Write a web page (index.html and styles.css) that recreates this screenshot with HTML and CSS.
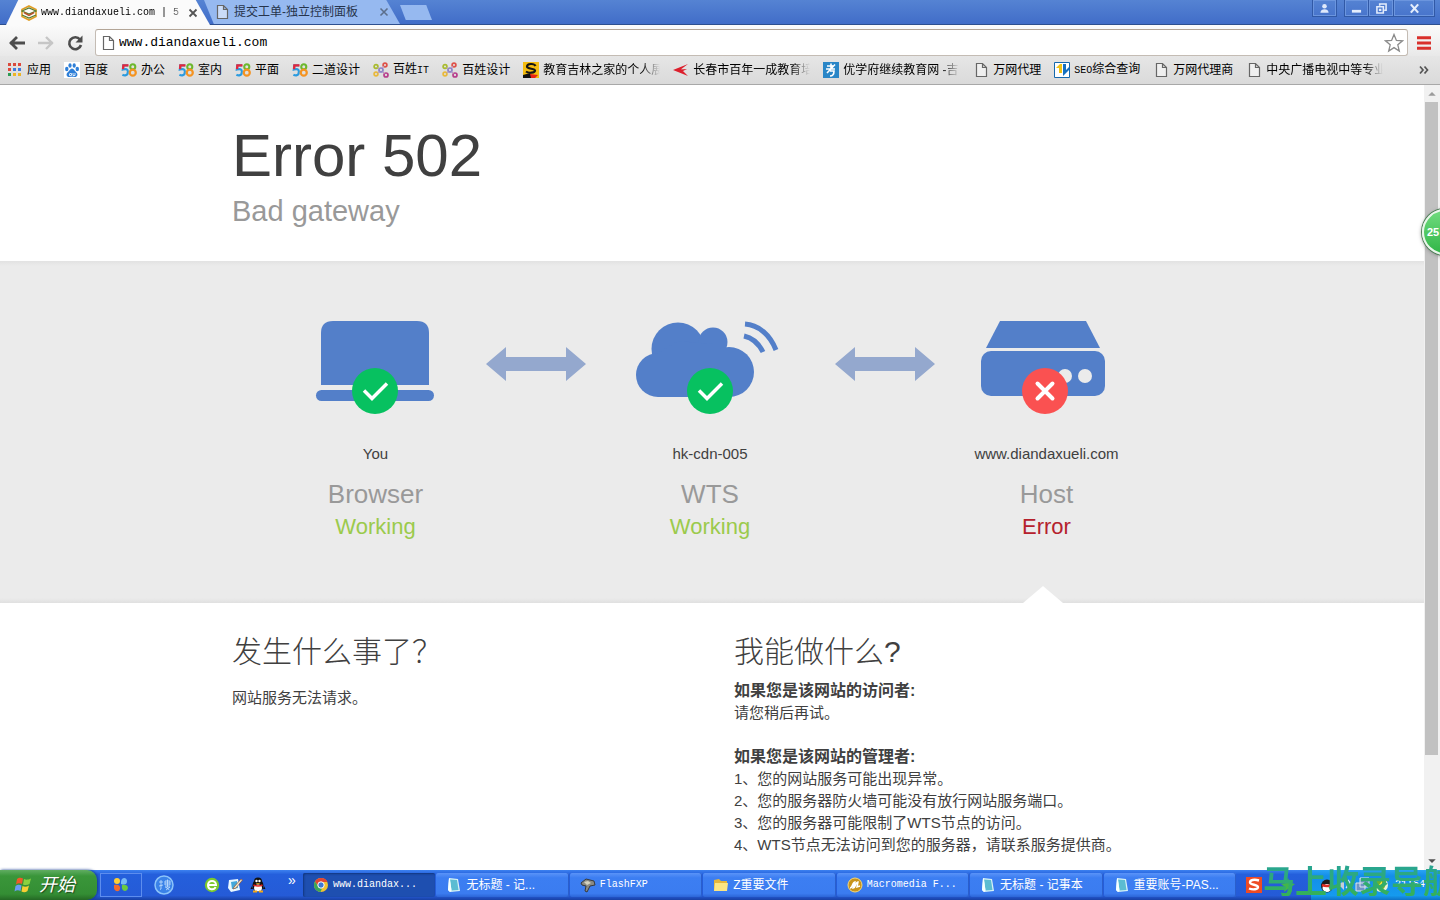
FILE: index.html
```html
<!DOCTYPE html>
<html lang="zh-CN">
<head>
<meta charset="utf-8">
<title>www.diandaxueli.com | 502</title>
<link rel="stylesheet" href="styles.css">
</head>
<body>
<svg class="defs" aria-hidden="true">
  <defs>
    <symbol id="page" viewBox="0 0 16 16"><path d="M3.5 1.5h6l4 4v9h-10z M9.5 1.5v4h4" fill="#fff" fill-opacity=".5" stroke="#666" stroke-width="1.2"/></symbol>
    <symbol id="five8" viewBox="0 0 17 16"><path d="M7.500 3H2.500L2 7.500c5-1.500 6 1 5 4.500-1 2-3.500 2-5.500 1" fill="none" stroke="#2b9be0" stroke-width="2.400"/><path d="M8 3H2.500L2.200 7" fill="none" stroke="#e6263a" stroke-width="2.400"/><circle cx="12.500" cy="4.500" r="2.700" fill="none" stroke="#6cb82e" stroke-width="2.200"/><circle cx="12.500" cy="10.800" r="3.200" fill="none" stroke="#f59320" stroke-width="2.400"/></symbol>
    <symbol id="dots" viewBox="0 0 16 16"><g fill="none" stroke-width="1.700"><circle cx="3" cy="4.500" r="1.900" stroke="#a9bb2e"/><circle cx="12" cy="3" r="1.900" stroke="#df5148"/><circle cx="8" cy="8" r="2" stroke="#8b80c8"/><circle cx="3" cy="12" r="1.900" stroke="#e9b93a"/><circle cx="13" cy="13" r="2" stroke="#b83d8b"/></g><path d="M4.500 5.500l2 1.500m3-1l1.500-2M6.500 9.500L4.500 11m5-1.500l2 2" stroke="#b39ac0"/></symbol>
    <symbol id="note" viewBox="0 0 16 16"><path d="M3 1l9 1 2 12-10 1-2-2z" fill="#d9f3f7"/><path d="M4 2.500l7 .5 1.500 10-7 .5z" fill="#5bbcd2"/><path d="M3 1L2 13l2 2 1.500-1.500L4 2.500z" fill="#f5ffff"/></symbol>
    <symbol id="tick" viewBox="0 0 46 46"><circle cx="23" cy="23" r="23" fill="#07c160"/><path d="M12 22.500l8 8L35 15.500" fill="none" stroke="#fff" stroke-width="3.500"/></symbol>
    <symbol id="arrow" viewBox="0 0 100 34"><path d="M0 17L20 0v10h60V0l20 17-20 17V24H20v10z" fill="#94a8ce"/></symbol>
  </defs>
</svg>

<header class="titlebar">
  <div class="tabs">
    <div class="tab active">
      <svg class="ic" viewBox="0 0 16 16"><path d="M8 1l7 3.500v7L8 15l-7-3.500v-7z" fill="none" stroke="#df9c23" stroke-width="1.600"/><path d="M1 6l7-3 7 3-7 3zM1 10l7 3 7-3" fill="none" stroke="#587d31" stroke-width="1.300"/><path d="M3 7.500l5 3 5-3" fill="none" stroke="#b5522a" stroke-width="1.500"/></svg>
      <span class="tabname mono">www.diandaxueli.com | 5</span>
      <button class="close" aria-label="关闭标签页"><svg viewBox="0 0 10 10"><path d="M1.500 1.500l7 7m0-7l-7 7" stroke="#555" stroke-width="1.800"/></svg></button>
    </div>
    <div class="tab">
      <svg class="ic"><use href="#page"/></svg>
      <span class="tabname">提交工单-独立控制面板</span>
      <button class="close" aria-label="关闭标签页"><svg viewBox="0 0 10 10"><path d="M1.500 1.500l7 7m0-7l-7 7" stroke="#5c6f8c" stroke-width="1.600"/></svg></button>
    </div>
    <button class="newtab" aria-label="新标签页"></button>
  </div>
  <div class="winbtns">
    <button class="user" aria-label="用户"><svg viewBox="0 0 12 12"><circle cx="6" cy="3.500" r="2.500" fill="#dfe9fb"/><path d="M1.500 10.500c0-5 9-5 9 0z" fill="#dfe9fb"/></svg></button>
    <button aria-label="最小化"><svg viewBox="0 0 12 12"><path d="M1 9h10" stroke="#e4edfc" stroke-width="3"/></svg></button>
    <button aria-label="还原"><svg viewBox="0 0 12 12"><path d="M4 3V1h7v7H9M1 4h7v7H1zM4 7h1v1H4z" fill="none" stroke="#e4edfc" stroke-width="1.700"/></svg></button>
    <button class="x" aria-label="关闭"><svg viewBox="0 0 12 12"><path d="M2 1.500l8 9m0-9l-8 9" stroke="#e4edfc" stroke-width="2.400"/></svg></button>
  </div>
</header>

<nav class="toolbar">
  <button aria-label="后退"><svg viewBox="0 0 18 18"><path d="M2 9h15M9 3L3 9l6 6" fill="none" stroke="#4d4d4d" stroke-width="2.800"/></svg></button>
  <button aria-label="前进"><svg viewBox="0 0 18 18"><path d="M1 9h15M9 3l6 6-6 6" fill="none" stroke="#c6c6c6" stroke-width="2.400"/></svg></button>
  <button aria-label="刷新"><svg viewBox="0 0 18 18"><path d="M14 5.500A6 6 0 1 0 15 11" fill="none" stroke="#4d4d4d" stroke-width="2.600"/><path d="M16.500 1.500v7h-7z" fill="#4d4d4d"/></svg></button>
  <div class="address">
    <svg class="ic"><use href="#page"/></svg>
    <input class="url" type="text" value="www.diandaxueli.com" aria-label="地址">
    <button class="star" aria-label="收藏"><svg viewBox="0 0 20 20"><path d="M10 1.500l2.400 5.900 6.100.4-4.700 4 1.500 6.200L10 14.600 4.700 18l1.500-6.200-4.700-4 6.100-.4z" fill="#fff" stroke="#8a8a8a" stroke-width="1.300"/></svg></button>
  </div>
  <button class="menu" aria-label="菜单"><svg viewBox="0 0 14 14"><path d="M0 1.800h14M0 7h14M0 12.200h14" stroke="#d9302c" stroke-width="3"/></svg></button>
</nav>

<nav class="bookmarks">
  <a href="#"><svg viewBox="0 0 16 16"><g><path d="M1 1h3v3H1zM6 1h3v3H6z" fill="#d94b3d"/><path d="M11 1h3v3h-3zM1 6h3v3H1z" fill="#e0483b"/><path d="M6 6h3v3H6zM11 6h3v3h-3z" fill="#3d7be0"/><path d="M1 11h3v3H1z" fill="#2c9c54"/><path d="M6 11h3v3H6zM11 11h3v3h-3z" fill="#edb526"/></g></svg><span>应用</span></a>
  <a href="#"><svg viewBox="0 0 16 16"><path d="M0 0h16v16H0z" fill="#fff"/><g fill="#2e7fd8"><ellipse cx="2.800" cy="7" rx="1.700" ry="2.200"/><ellipse cx="6" cy="3.500" rx="1.600" ry="2.300"/><ellipse cx="10.200" cy="3.500" rx="1.600" ry="2.300"/><ellipse cx="13.300" cy="7" rx="1.700" ry="2.200"/><path d="M8 6.500c2 0 2.500 2.500 4.500 4 2 2 .5 5-2 4.500-2-.5-3-.5-5 0-2.500.5-4-2.500-2-4.500 2-1.500 2.500-4 4.500-4z"/></g><path d="M5.500 11.500h2v2h-2v-1.500M9 11v2.500h2V11" fill="none" stroke="#fff" stroke-width=".8"/></svg><span>百度</span></a>
  <a href="#"><svg><use href="#five8"/></svg><span>办公</span></a>
  <a href="#"><svg><use href="#five8"/></svg><span>室内</span></a>
  <a href="#"><svg><use href="#five8"/></svg><span>平面</span></a>
  <a href="#"><svg><use href="#five8"/></svg><span>二道设计</span></a>
  <a href="#"><svg><use href="#dots"/></svg><span>百姓<span class="mono">IT</span></span></a>
  <a href="#"><svg><use href="#dots"/></svg><span>百姓设计</span></a>
  <a href="#"><svg viewBox="0 0 16 16"><path d="M0 0h16v16H0z" fill="#f5bd10"/><path d="M0 16v-3l7-2 2 3v2z" fill="#111"/><path d="M7 12l8 1-3 3H8z" fill="#e82315"/><path d="M12.500 4C11 1 4 1.500 4 4.500S12 6 12 8.500 5.500 11.500 3 9.500" fill="none" stroke="#151515" stroke-width="2.200"/></svg><span class="long">教育吉林之家的个人展</span></a>
  <a href="#"><svg viewBox="0 0 16 16"><path d="M0 8L15 2 7 8zM0 8l8-1 7 7zM0 8l14-1-6 3z" fill="#dc1f2c"/></svg><span class="long">长春市百年一成教育培</span></a>
  <a href="#"><svg viewBox="0 0 16 16"><path d="M0 0h16v16H0z" fill="#2a86c7"/><path d="M4 4h6M8 1.500V7M3 7h9M12 2.500L4 11M7 9h4c0 3-1 5-4 5" fill="none" stroke="#fff" stroke-width="1.600"/></svg><span class="long">优学府继续教育网 -吉</span></a>
  <a href="#"><svg><use href="#page"/></svg><span>万网代理</span></a>
  <a href="#"><svg viewBox="0 0 16 16"><path d="M.5.500h15v15H.5z" fill="#fff" stroke="#1668ad"/><path d="M2 6l4-4h2v9H5V6z" fill="#f2c414"/><path d="M9 2v12l6-6V5l-3 3V2z" fill="#1670c0"/></svg><span><span class="mono">SEO</span>综合查询</span></a>
  <a href="#"><svg><use href="#page"/></svg><span>万网代理商</span></a>
  <a href="#"><svg><use href="#page"/></svg><span class="long">中央广播电视中等专业</span></a>
  <button class="more" aria-label="更多书签"><svg viewBox="0 0 10 10"><path d="M1 1.500L4 5 1 8.500M5.500 1.500l3 3.500-3 3.500" fill="none" stroke="#555" stroke-width="1.700"/></svg></button>
</nav>

<div class="viewport">
  <main class="page">
    <section class="heading">
      <div class="wrap">
        <h1>Error 502</h1>
        <p class="sub">Bad gateway</p>
      </div>
    </section>

    <section class="status">
      <div class="chain">
        <div class="node">
          <svg class="pic" viewBox="0 0 124 93"><path d="M8 64V12Q8 0 20 0h84q12 0 12 12v52z" fill="#537fc9"/><rect x="3" y="69" width="118" height="11" rx="5.500" fill="#537fc9"/><use href="#tick" x="39" y="47" width="46" height="46"/></svg>
          <p class="name">You</p><h3>Browser</h3><p class="state ok">Working</p>
        </div>
        <svg class="link"><use href="#arrow"/></svg>
        <div class="node">
          <svg class="pic wide" viewBox="0 0 148 93"><g fill="#537fc9"><circle cx="42" cy="28" r="26.500"/><circle cx="77" cy="21" r="14.500"/><circle cx="22" cy="54" r="22"/><circle cx="93" cy="51" r="25"/><path d="M22 32L42 20l35 3 16 12v41H22z"/></g><g fill="none" stroke="#537fc9" stroke-width="5"><path d="M109 3c14 1 25 11 31 26M108 15c9 2 15 8 19 16"/></g><use href="#tick" x="51" y="47" width="46" height="46"/></svg>
          <p class="name">hk-cdn-005</p><h3>WTS</h3><p class="state ok">Working</p>
        </div>
        <svg class="link"><use href="#arrow"/></svg>
        <div class="node host">
          <svg class="pic" viewBox="0 0 124 93"><path d="M19 0h86l14 27H5z" fill="#537fc9"/><rect x="0" y="30" width="124" height="45" rx="10" fill="#537fc9"/><circle cx="84" cy="55" r="7" fill="#ebebeb"/><circle cx="104" cy="55" r="7" fill="#ebebeb"/><circle cx="64" cy="70" r="23" fill="#fa5151"/><path d="M56.500 62.500l15 15m0-15l-15 15" stroke="#fff" stroke-width="4" stroke-linecap="round"/></svg>
          <p class="name">www.diandaxueli.com</p><h3>Host</h3><p class="state bad">Error</p>
          <svg class="notch" viewBox="0 0 40 17"><path d="M0 17L20 0l20 17z" fill="#fff"/></svg>
        </div>
      </div>
    </section>

    <section class="wrap help">
      <div>
        <h2>发生什么事了？</h2>
        <p class="first">网站服务无法请求。</p>
      </div>
      <div>
        <h2>我能做什么?</h2>
        <p><strong>如果您是该网站的访问者:</strong></p>
        <p>请您稍后再试。</p>
        <p class="gap"><strong>如果您是该网站的管理者:</strong></p>
        <p>1、您的网站服务可能出现异常。</p>
        <p>2、您的服务器防火墙可能没有放行网站服务端口。</p>
        <p>3、您的服务器可能限制了WTS节点的访问。</p>
        <p>4、WTS节点无法访问到您的服务器，请联系服务提供商。</p>
      </div>
    </section>
  </main>
  <div class="scrollbar">
    <svg viewBox="0 0 17 17"><path d="M4.500 11l4-4 4 4z" fill="#9b9b9b"/></svg>
    <div class="track"><div class="thumb"></div></div>
    <svg viewBox="0 0 17 17"><path d="M4.500 6l4 4 4-4z" fill="#505050"/></svg>
  </div>
  <div class="ball">25</div>
</div>

<footer class="taskbar">
  <button class="start"><svg viewBox="0 0 20 20"><path d="M3 4c2-2 4-1.500 6-.5L8 9C6 8 4 8 2 9.500z" fill="#ef5a2a"/><path d="M10 4c2 1 4 1 7-.5L15.500 9c-2 1-4 1.500-6.500.5z" fill="#8bd13f"/><path d="M1.500 11c2-1.500 4-1.500 6-.5L6.500 16c-2-1-4-1-6 .5z" fill="#6a9cf5"/><path d="M8.500 11c2 1 4 1 6.500-.5L13.500 16c-2 1.500-4 1.500-6 .5z" fill="#f8ce33"/></svg>开始</button>
  <div class="quick">
    <button class="boxed" aria-label="快捷方式"><svg viewBox="0 0 16 16"><circle cx="4" cy="4" r="3" fill="#ffcf35"/><path d="M8 5c0-5 6-5 6-1s-3 4-6 3z" fill="#76b9f7"/><path d="M1 8c3-1 7 0 6 4s-6 2-6-1z" fill="#f36b2c"/><path d="M9 8c6-1 7 3 5 5s-6 1-5-5z" fill="#6bcb40"/></svg></button>
    <button class="big" aria-label="搜狗"><svg viewBox="0 0 20 20"><circle cx="10" cy="10" r="9" fill="#3a82e8" stroke="#8cc4fa" stroke-width="1.500"/><path d="M5 7h4M7 5v9l-1 .5M5 11l4-1M11 6h5v4h-5zM13.500 4.500V12M11 12h5l-4 3m-.5-3l4 3M11 8h5" fill="none" stroke="#c7e2ff" stroke-width=".8"/></svg></button>
    <button aria-label="浏览器"><svg viewBox="0 0 16 16"><circle cx="8" cy="8" r="7.200" fill="#7cc92d"/><path d="M4 8h8c0-5.500-8-5.500-8 0s6.500 5 7.500 2" fill="none" stroke="#fff" stroke-width="2"/></svg></button>
    <button aria-label="桌面"><svg viewBox="0 0 16 16"><path d="M2 3l9-1 2 11-9 2-3-4z" fill="#e9f8ff"/><path d="M4 5l6-1 1 7-6 1z" fill="#43a7da"/><path d="M7 10l7-8 1.500 1L9 11l-3 1z" fill="#f1e6cb" stroke="#8b5532" stroke-width=".7"/></svg></button>
    <button aria-label="QQ"><svg viewBox="0 0 16 16"><ellipse cx="8" cy="8.500" rx="5.500" ry="6.500" fill="#111"/><circle cx="8" cy="4.500" r="4" fill="#111"/><path d="M2 9l-1.500 3L3 12m11-3l1.500 3-2.500 0" fill="#111"/><ellipse cx="8" cy="11" rx="4" ry="3.500" fill="#fff"/><circle cx="6.500" cy="4" r="1.200" fill="#fff"/><circle cx="9.500" cy="4" r="1.200" fill="#fff"/><path d="M5.500 6.200h5L8 7.500z" fill="#f6b516"/><path d="M3.500 8q4.500 2 9 0" stroke="#e42321" stroke-width="1.700" fill="none"/><path d="M3 14.500h4m2 0h4" stroke="#f6a716" stroke-width="2"/></svg></button>
    <span class="chev">»</span>
  </div>
  <div class="tasks">
    <button class="task on"><svg viewBox="0 0 16 16"><circle cx="8" cy="8" r="7" fill="#f1c232"/><path d="M2 4.500A7 7 0 0 1 14.500 5H8L5 9z" fill="#e04634"/><path d="M2 4.500l4 6 3 1L7.500 15A7 7 0 0 1 2 4.500z" fill="#3aa757"/><circle cx="8" cy="8" r="3.200" fill="#3b78d8" stroke="#fff"/></svg><span class="mono">www.diandax...</span></button>
    <button class="task"><svg><use href="#note"/></svg><span>无标题 - 记...</span></button>
    <button class="task"><svg viewBox="0 0 16 16"><path d="M1 6l5-4 8 2 1 4-5 1-3 6-2-1 1-5-4-1z" fill="#8a8a84" stroke="#36393d"/><path d="M4 5l4-1 3 2-4 2z" fill="#d5d3bf"/></svg><span class="mono">FlashFXP</span></button>
    <button class="task"><svg viewBox="0 0 16 16"><path d="M1 3l5-1 2 2h6v10H1z" fill="#e5b63b"/><path d="M2 6h13l-1 8H1z" fill="#fce582"/></svg><span>Z重要文件</span></button>
    <button class="task"><svg viewBox="0 0 16 16"><circle cx="8" cy="8" r="7" fill="#c9941c" stroke="#f5d87a"/><path d="M3 11c3 0 2-6 5-6l-2 6c3 0 2-6 5-6l-1 5 3-1" fill="none" stroke="#fff" stroke-width="1.500"/></svg><span class="mono">Macromedia F...</span></button>
    <button class="task"><svg><use href="#note"/></svg><span>无标题 - 记事本</span></button>
    <button class="task"><svg><use href="#note"/></svg><span>重要账号-PAS...</span></button>
  </div>
  <div class="tray">
    <div class="lang"><svg viewBox="0 0 16 16"><path d="M0 0h16v16H0z" fill="#ee4b24"/><path d="M13 3.500C8 2 4 3 4 5.500s8 2 8 4.500-5 3-9 1.500" fill="none" stroke="#fff" stroke-width="2.400"/></svg><svg viewBox="0 0 16 16"><path d="M8 1l2 5 5 1-4 3 1 5-4-3-4 3 1-5-4-3 5-1z" fill="#43b649"/></svg></div>
    <div class="notify">
      <svg viewBox="0 0 16 16"><ellipse cx="8" cy="9" rx="6" ry="6.500" fill="#1c1c1c"/><ellipse cx="8" cy="11" rx="4.500" ry="4" fill="#fff"/><path d="M3 8q5 2 10 0" stroke="#e12c22" stroke-width="2.500" fill="none"/></svg>
      <svg viewBox="0 0 16 16"><path d="M1 6h3l3-3v10l-3-3H1z" fill="#c7ced8"/><path d="M9 5q3 3 0 6m2-8q5 5 0 10" fill="none" stroke="#d5e7ff" stroke-width="1.300"/></svg>
      <svg viewBox="0 0 16 16"><path d="M5 1h9v9H5zM1 6h9v8H1z" fill="#6f95c7" stroke="#dfe5ef"/></svg>
      <svg viewBox="0 0 16 16"><circle cx="8" cy="8" r="7" fill="#e9f2d8"/><path d="M8 2l5 2c0 5-2 8-5 10-3-2-5-5-5-10z" fill="#6bb22e"/><path d="M9 4L6 8h2l-1 4 4-5H9z" fill="#ffe138"/></svg>
      <time class="mono">21:54</time>
    </div>
  </div>
  <div class="mark">马上收录导航</div>
</footer>
</body>
</html>
```
FILE: styles.css
```css
* { box-sizing: border-box; }
body {
  margin: 0;
  height: 100vh;
  display: flex;
  flex-direction: column;
  overflow: hidden;
  background: #fff;
  color: #404040;
  font: 12px/16px "Liberation Sans", "Noto Sans CJK SC", sans-serif;
}
h1, h2, h3, p { margin: 0; font-weight: 400; }
button { padding: 0; border: 0; background: none; font: inherit; color: inherit; display: flex; align-items: center; justify-content: center; }
a { color: inherit; text-decoration: none; }
svg { display: block; flex: none; }
.defs { position: absolute; width: 0; height: 0; }
.mono { font-family: "Liberation Mono", monospace; font-size: 10px; }
.ic { width: 16px; height: 16px; }

.titlebar {
  flex: none;
  height: 25px;
  display: flex;
  justify-content: space-between;
  background: linear-gradient(#5583d3, #416dc8);
  border-bottom: 1px solid #2d4f8f;
}
.tabs { display: flex; align-items: flex-end; padding-left: 6px; }
.tab {
  width: 204px;
  height: 24px;
  padding: 0 16px 0 20px;
  display: flex;
  align-items: center;
  background: #96b9f0;
  color: #26344c;
  clip-path: polygon(0 0, 93% 0, 100% 100%, 5% 100%);
}
.tab.active {
  height: 25px;
  margin-bottom: -1px;
  padding: 0 12px 0 15px;
  background: #fbfbfb;
  color: #000;
  clip-path: polygon(6% 0, 93% 0, 100% 100%, 0 100%);
}
.tab + .tab { margin-left: -6px; width: 196px; padding: 0 11px 0 10px; }
.tabname { flex: 1; margin-left: 4px; overflow: hidden; white-space: nowrap; }
.tab.active .tabname { mask-image: linear-gradient(90deg, #000 86%, transparent); }
.close svg { width: 10px; height: 10px; }
.newtab {
  width: 32px;
  height: 15px;
  margin-bottom: 4px;
  background: #96b9f0;
  clip-path: polygon(0 0, 82% 0, 100% 100%, 18% 100%);
}
.winbtns { display: flex; height: 17px; padding-right: 5px; }
.winbtns button { width: 25px; border: 1px solid #3159a6; border-top: 0; box-shadow: inset 0 0 0 1px #6b95de; }
.winbtns button + button { border-left: 0; }
.winbtns svg { width: 11px; height: 11px; }
.winbtns .user { margin-right: 7px; }
.winbtns .user + button { border-left: 1px solid #3159a6; }
.winbtns .x { width: 41px; }

.toolbar {
  flex: none;
  height: 31px;
  padding: 4px 8px 0;
  display: flex;
  align-items: center;
  gap: 11px;
  background: linear-gradient(#fbfbfb, #e9e9e9);
}
.toolbar > button svg { width: 18px; height: 18px; }
.toolbar .menu { margin-left: -3px; width: 16px; }
.toolbar .menu svg { width: 14px; height: 14px; }
.address {
  flex: 1;
  height: 27px;
  padding: 0 3px 0 4px;
  display: flex;
  align-items: center;
  gap: 3px;
  background: #fff;
  border: 1px solid #c4bcb4;
  border-top-color: #b3a597;
  border-radius: 3px;
}
.url { flex: 1; min-width: 0; border: 0; padding: 0; outline: 0; background: none; color: #000; font: 13px/18px "Liberation Mono", monospace; }
.star svg { width: 20px; height: 20px; }

.bookmarks {
  flex: none;
  height: 29px;
  padding: 0 11px 1px 7px;
  display: flex;
  align-items: center;
  gap: 13px;
  background: linear-gradient(#e6e6e6, #dadada);
  border-bottom: 1px solid #a8a8a8;
  color: #000;
  white-space: nowrap;
}
.bookmarks a { display: flex; align-items: center; gap: 4px; flex: none; }
.bookmarks svg { width: 16px; height: 16px; }
.long { width: 117px; mask-image: linear-gradient(90deg, #000 84%, transparent); }
.more { margin-left: auto; }
.bookmarks .more svg { width: 10px; height: 10px; }

.viewport { flex: 1; min-height: 0; display: flex; position: relative; }
.page { flex: 1; min-width: 0; overflow: hidden; }
.wrap { max-width: 960px; margin: 0 auto; }
.heading { padding: 36px 0 29px; }
h1 { font-size: 60px; line-height: 70px; }
.sub { font-size: 29px; line-height: 41px; color: #999; }
.status {
  padding: 60px 0 0;
  background: linear-gradient(#e2e2e2, #ebebeb 5px, #ebebeb calc(100% - 5px), #e0e0e0);
}
.chain { max-width: 893px; margin: 0 auto; display: grid; grid-template-columns: 220fr 100px 249fr 100px 224fr; }
.node { position: relative; display: flex; flex-direction: column; align-items: center; padding-bottom: 58px; }
.pic { width: 124px; height: 93px; margin-right: 2px; }
.pic.wide { width: 148px; margin-right: 0; }
.host .pic { margin-right: 7px; }
.link { width: 100px; height: 34px; margin-top: 26px; }
.name { margin-top: 29px; font-size: 15px; line-height: 22px; }
h3 { margin-top: 14px; font-size: 26px; line-height: 30px; color: #999; }
.state { font-size: 22px; line-height: 36px; }
.ok { color: #9bca4c; }
.bad { color: #b5212c; }
.notch { position: absolute; bottom: 0; left: calc(50% - 24px); width: 40px; height: 17px; }
.help { display: grid; grid-template-columns: 502fr 458fr; font-size: 15px; line-height: 22px; padding-top: 29px; }
h2 { font-size: 30px; line-height: 40px; font-weight: 300; margin-bottom: 8px; }
.first { padding-top: 7px; }
.gap { margin-top: 22px; }
strong { font-size: 16px; }

.scrollbar { width: 16px; display: flex; flex-direction: column; background: #f1f1f1; }
.scrollbar svg { width: 16px; height: 17px; }
.track { flex: 1; padding: 0 2px 0 1px; }
.thumb { height: 87%; background: #c1c1c1; }
.ball {
  position: absolute;
  right: -28px;
  top: 124px;
  width: 46px;
  height: 46px;
  padding-left: 3px;
  border-radius: 50%;
  border: 2px solid #e8f6ea;
  background: linear-gradient(#6fdb7e, #32b648);
  box-shadow: 0 0 0 1px #4d7f56, 0 1px 4px #777;
  color: #fff;
  font-size: 11px;
  font-weight: 700;
  line-height: 42px;
}

.taskbar {
  flex: none;
  position: relative;
  height: 30px;
  display: flex;
  background: linear-gradient(#3c81f0, #245fdc 15%, #255bd7 85%, #1941a5);
  color: #fff;
}
.start {
  flex: none;
  width: 97px;
  gap: 5px;
  padding-right: 8px;
  border-radius: 0 10px 10px 0;
  background: linear-gradient(#61ad62, #3a963a 20%, #348e34 80%, #246824);
  box-shadow: 1px 0 3px #12388f;
  font-size: 18px;
  font-style: italic;
  text-shadow: 1px 1px 1px #1f4a1f;
}
.start svg { width: 20px; height: 20px; }
.quick { flex: none; width: 206px; padding-left: 3px; display: flex; align-items: center; }
.quick svg { width: 16px; height: 16px; }
.quick .boxed { width: 42px; height: 24px; border: 1px solid #5d8dee; }
.quick .big { margin: 0 30px 0 12px; }
.quick .big svg { width: 20px; height: 20px; }
.quick button + button + button { margin-right: 7px; }
.chev { margin: 0 0 10px 15px; font-size: 14px; }
.tasks { flex: 933 1 0; min-width: 0; display: flex; gap: 1px; padding: 3px 0; }
.task {
  flex: 1;
  min-width: 0;
  gap: 4px;
  padding-left: 10px;
  justify-content: flex-start;
  background: linear-gradient(#5a93f8, #3c7ef2 20%, #3b7cf0 85%, #2c65d6);
  border-radius: 2px;
  white-space: nowrap;
  box-shadow: inset -1px 0 0 #2a5fcc;
}
.task.on { background: #1e4fb0; box-shadow: inset 1px 1px 2px #12367f; }
.task svg { width: 16px; height: 16px; }
.tray { flex: 204 1 0; min-width: 0; display: flex; }
.tray svg { width: 16px; height: 16px; }
.lang { flex: none; width: 75px; padding-left: 10px; display: flex; align-items: center; gap: 18px; }
.notify { flex: 1; display: flex; align-items: center; gap: 2px; padding-left: 8px; background: linear-gradient(#2aa4f4, #138ee9 20%, #159aee 85%, #0f72c6); }
.notify time { margin-left: 4px; }
.mark {
  position: absolute;
  top: -8px;
  right: 0;
  width: 177px;
  white-space: nowrap;
  font: 700 32px/34px "Noto Sans CJK SC", sans-serif;
  color: transparent;
  background: linear-gradient(#27a49a, #35b156);
  background-clip: text;
}
```
